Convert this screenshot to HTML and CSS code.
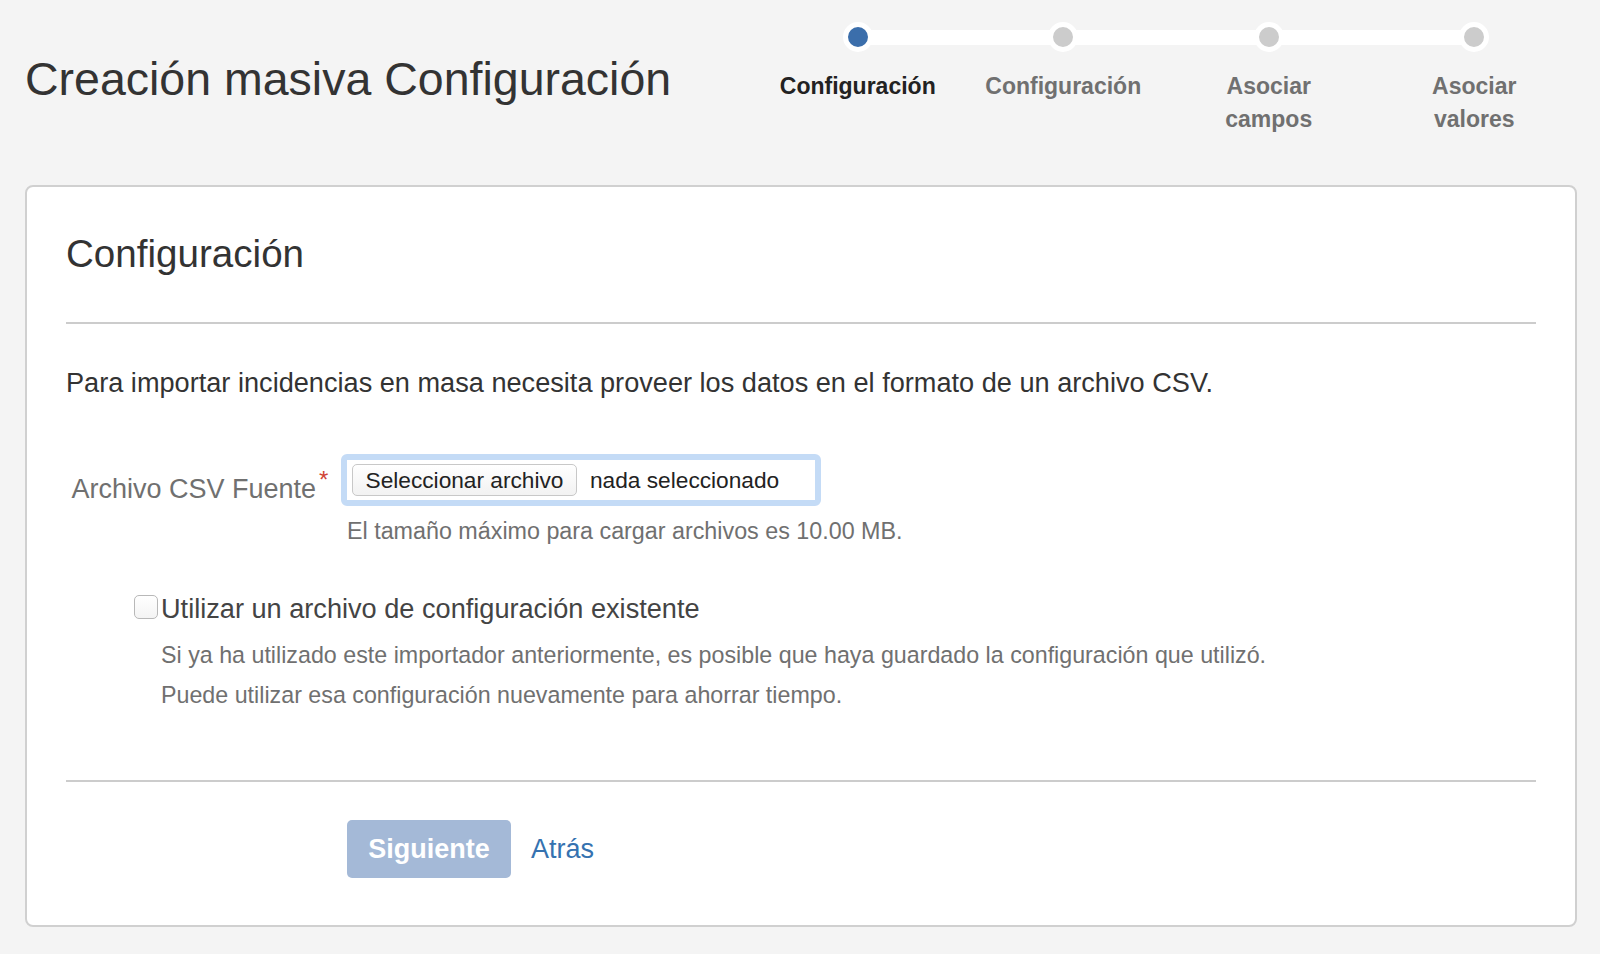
FILE: index.html
```html
<!DOCTYPE html>
<html lang="es">
<head>
<meta charset="utf-8">
<title>Creación masiva Configuración</title>
<link rel="stylesheet" href="styles.css">
</head>
<body>
<div class="page">
  <header class="page-header">
    <h1 class="page-title">Creación masiva Configuración</h1>
    <ol class="steps">
      <li class="step is-current"><span class="step-dot"></span><span class="step-label">Configuración</span></li>
      <li class="step"><span class="step-dot"></span><span class="step-label">Configuración</span></li>
      <li class="step"><span class="step-dot"></span><span class="step-label">Asociar campos</span></li>
      <li class="step"><span class="step-dot"></span><span class="step-label">Asociar valores</span></li>
    </ol>
  </header>

  <main class="panel">
    <h2 class="panel-title">Configuración</h2>
    <hr class="divider">
    <p class="intro">Para importar incidencias en masa necesita proveer los datos en el formato de un archivo CSV.</p>

    <div class="field-group">
      <label class="field-label">Archivo CSV Fuente<span class="required">*</span></label>
      <div class="field-body">
        <div class="file-input">
          <span class="file-button">Seleccionar archivo</span>
          <span class="file-name">nada seleccionado</span>
        </div>
        <div class="field-hint">El tamaño máximo para cargar archivos es 10.00 MB.</div>
      </div>
    </div>

    <div class="checkbox-group">
      <div class="checkbox-row">
        <span class="checkbox"></span>
        <label class="checkbox-label">Utilizar un archivo de configuración existente</label>
      </div>
      <div class="checkbox-desc">Si ya ha utilizado este importador anteriormente, es posible que haya guardado la configuración que utilizó.<br>Puede utilizar esa configuración nuevamente para ahorrar tiempo.</div>
    </div>

    <hr class="divider divider-bottom">

    <div class="actions">
      <button class="btn-primary" type="button" disabled>Siguiente</button>
      <a class="link" href="#">Atrás</a>
    </div>
  </main>
</div>
</body>
</html>
```

FILE: styles.css
```css
* { box-sizing: border-box; }

html, body {
  margin: 0;
  padding: 0;
  background: #f4f4f4;
  font-family: "Liberation Sans", Arial, Helvetica, sans-serif;
  color: #333;
}

.page {
  padding: 0 23px 0 25px;
}

/* Header */
.page-header {
  display: flex;
  justify-content: space-between;
  align-items: flex-start;
  height: 185px;
}

.page-title {
  margin: 51px 0 0 0;
  font-size: 46.5px;
  line-height: 56px;
  font-weight: normal;
  color: #333;
}

.steps {
  position: relative;
  display: flex;
  width: 822px;
  margin: 0;
  padding: 0;
  list-style: none;
}

.steps::before {
  content: "";
  position: absolute;
  left: 102.75px;
  right: 102.75px;
  top: 29.5px;
  height: 15px;
  background: #fff;
}

.step {
  flex: 1 1 0;
  display: flex;
  flex-direction: column;
  align-items: center;
}

.step-dot {
  position: relative;
  width: 30px;
  height: 30px;
  margin-top: 22px;
  border: 5px solid #fff;
  border-radius: 50%;
  background: #cccccc;
}

.step.is-current .step-dot {
  background: #3b6eab;
}

.step-label {
  width: min-content;
  margin-top: 18px;
  text-align: center;
  font-size: 23px;
  line-height: 33px;
  font-weight: bold;
  color: #707070;
}

.step.is-current .step-label {
  color: #222;
}

/* Panel */
.panel {
  display: block;
  background: #fff;
  border: 2px solid #d0d0d0;
  border-radius: 8px;
  padding: 44px 39px 47px;
}

.panel-title {
  margin: 0;
  font-size: 38.6px;
  line-height: 46px;
  font-weight: normal;
  color: #333;
}

.divider {
  display: block;
  height: 2px;
  margin: 45px 0 0 0;
  border: 0;
  background: #cccccc;
}

.intro {
  margin: 39px 0 0 0;
  font-size: 27.15px;
  line-height: 39px;
  color: #333;
}

/* File field */
.field-group {
  display: flex;
  align-items: flex-start;
  margin-top: 52px;
}

.field-label {
  position: relative;
  width: 250px;
  margin: 16px 25px 0 0;
  text-align: right;
  font-size: 27px;
  line-height: 39px;
  color: #707070;
}

.required {
  position: absolute;
  left: 100%;
  top: -1px;
  margin-left: 3px;
  font-size: 24px;
  line-height: 22px;
  color: #d04437;
}

.field-body {
  display: flex;
  flex-direction: column;
}

.file-input {
  display: flex;
  align-items: center;
  width: 480px;
  height: 52px;
  padding: 4px 5px;
  border: 6px solid #c4dbf6;
  border-radius: 6px;
  background: #fff;
}

.file-button {
  display: flex;
  align-items: center;
  justify-content: center;
  width: 225px;
  height: 32px;
  border: 1px solid #c8c8c8;
  border-radius: 5px;
  background: linear-gradient(#ffffff, #f2f2f2);
  font-size: 22.7px;
  color: #222;
}

.file-name {
  margin-left: 13px;
  font-size: 22.7px;
  color: #222;
}

.field-hint {
  margin-top: 10px;
  padding-left: 6px;
  font-size: 23.3px;
  line-height: 30px;
  color: #707070;
}

/* Checkbox */
.checkbox-group {
  margin-top: 43px;
  padding-left: 68px;
}

.checkbox-row {
  display: flex;
  align-items: flex-start;
}

.checkbox {
  width: 24px;
  height: 24px;
  margin: 6px 3px 0 0;
  border: 1.5px solid #b8b8b8;
  border-radius: 5px;
  background: linear-gradient(#ffffff, #f4f4f4);
}

.checkbox-label {
  font-size: 27.15px;
  line-height: 39px;
  color: #444;
}

.checkbox-desc {
  margin-top: 7px;
  padding-left: 27px;
  font-size: 23.25px;
  line-height: 40px;
  color: #707070;
}

.divider-bottom {
  margin-top: 65px;
}

/* Actions */
.actions {
  display: flex;
  align-items: center;
  margin-top: 38px;
  padding-left: 281px;
}

.btn-primary {
  width: 164px;
  height: 58px;
  padding: 0;
  border: 0;
  border-radius: 5px;
  background: #a4b9d7;
  color: #fff;
  font-family: "Liberation Sans", Arial, Helvetica, sans-serif;
  font-size: 27px;
  font-weight: bold;
}

.link {
  margin-left: 20px;
  font-size: 27px;
  color: #3572b0;
  text-decoration: none;
}
```
